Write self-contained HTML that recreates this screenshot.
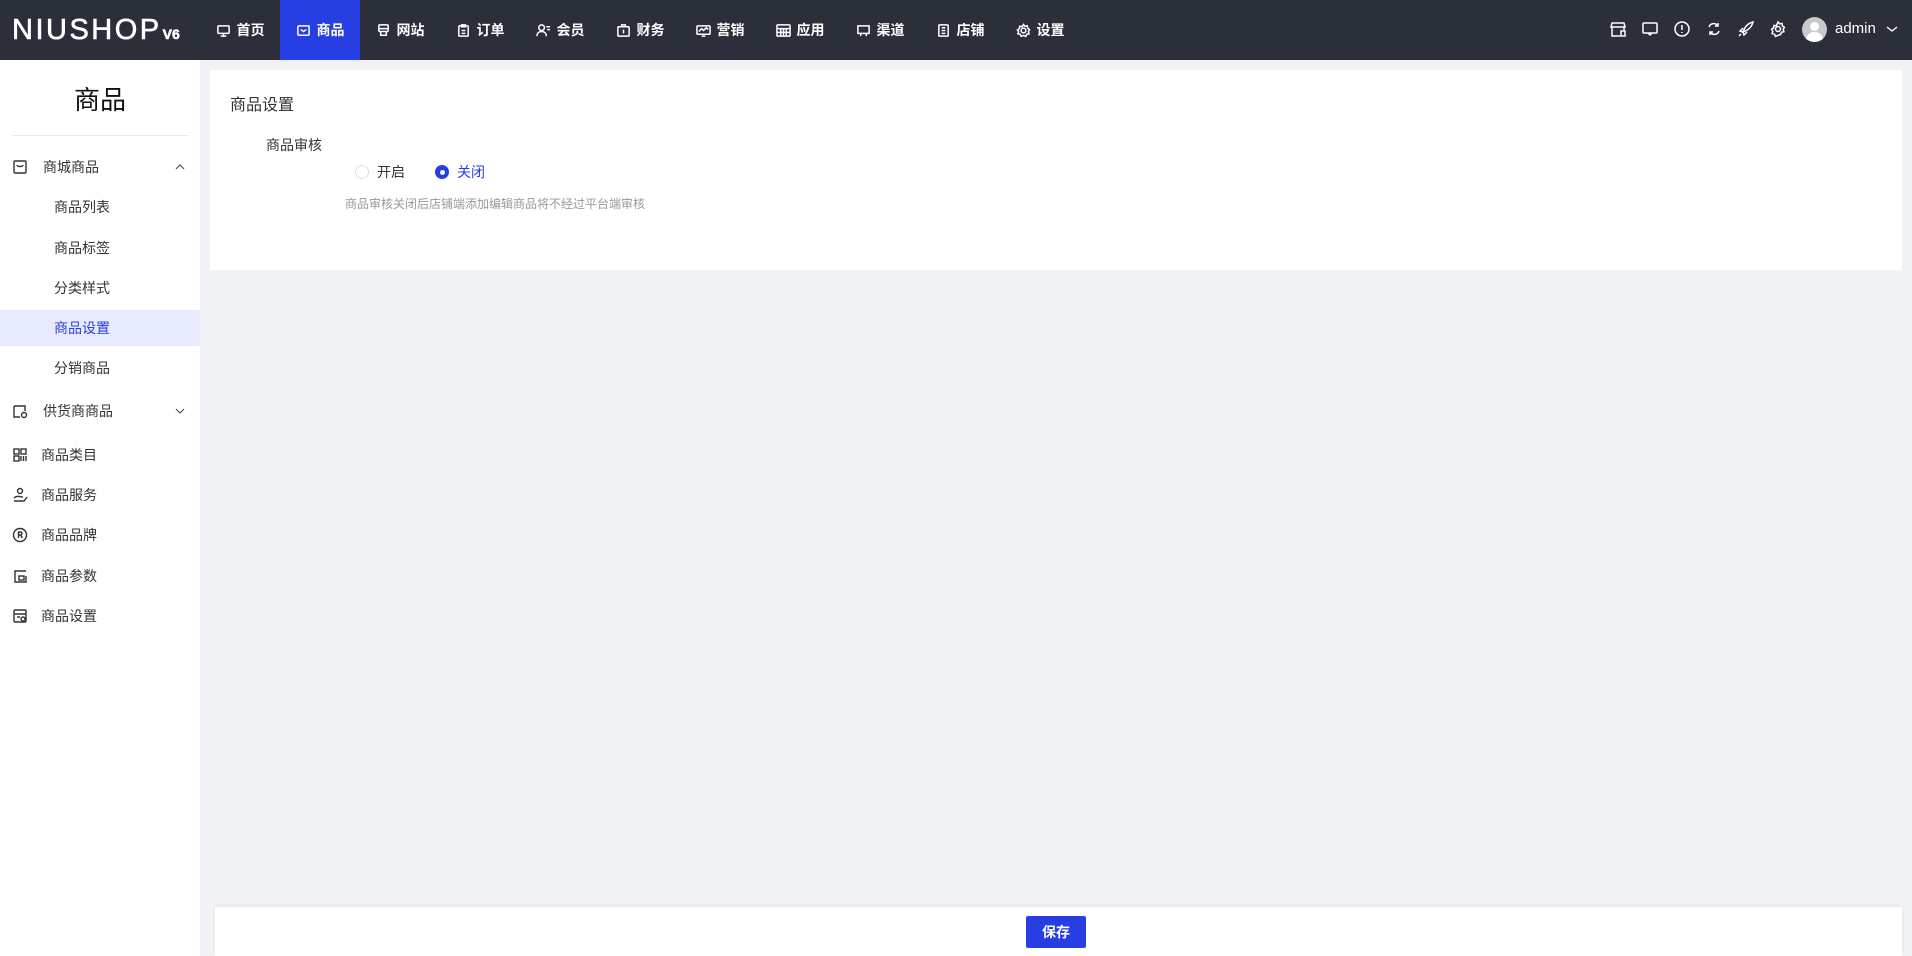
<!DOCTYPE html>
<html><head><meta charset="utf-8"><style>
*{margin:0;padding:0;box-sizing:border-box}
body{width:1912px;height:956px;background:#f0f2f5;font-family:"Liberation Sans","Noto Sans CJK SC",sans-serif;position:relative;overflow:hidden;color:#333}
.hd{position:absolute;left:0;top:0;width:1912px;height:60px;background:#2b2f3a;color:#fff}
.logo{position:absolute;left:12px;top:14px;font-size:29px;font-weight:normal;letter-spacing:2.5px;color:#fff;font-family:"Liberation Sans",sans-serif;-webkit-text-stroke:0.6px #fff}
.logo small{font-size:14px;margin-left:1px;letter-spacing:0;font-weight:bold}
.nav{position:absolute;left:200px;top:0;height:60px;display:flex}
.nav div{width:80px;height:60px;display:flex;align-items:center;justify-content:center;font-size:14px;font-weight:bold;gap:6px}
.nav div.on{background:#273ee3}
.nav svg{width:15px;height:15px;stroke:#fff;fill:none;stroke-width:1.6}
.ri{position:absolute;top:20px;width:18px;height:18px;stroke:#fff;fill:none;stroke-width:1.5}
.side{position:absolute;left:0;top:60px;width:200px;height:896px;background:#fff}
.side .t{position:absolute;top:20px;width:200px;text-align:center;font-size:26px;color:#111}
.side .dv{position:absolute;left:12px;top:75px;width:177px;height:1px;background:#e8e8e8}
.it{position:absolute;left:0;width:200px;height:36px;line-height:36px;font-size:14px;color:#333}
.it svg{position:absolute;left:12px;top:10px;width:16px;height:16px;stroke:#333;fill:none;stroke-width:1.4}
.it svg.ch{left:175px;top:15px;width:10px;height:6px;stroke:#555;stroke-width:1.2}
.card{position:absolute;left:210px;top:70px;width:1692px;height:200px;background:#fff}
.foot{position:absolute;left:215px;top:907px;width:1687px;height:49px;background:#fff;box-shadow:0 -1px 4px rgba(0,0,0,.06)}
.btn{position:absolute;left:811px;top:9px;width:60px;height:32px;background:#273ee3;color:#fff;font-size:14px;font-weight:bold;text-align:center;line-height:32px;border-radius:2px}
</style></head><body>
<div class="hd">
<div class="logo">NIUSHOP<small>V6</small></div>
<div class="nav">
<div><svg viewBox="0 0 16 16"><rect x="2" y="3" width="12" height="8" rx="1"/><path d="M8 11v3M5 14h6"/></svg>首页</div>
<div class="on"><svg viewBox="0 0 16 16"><rect x="2" y="3" width="12" height="10" rx="1"/><path d="M5 7l3 2 3-2"/></svg>商品</div>
<div><svg viewBox="0 0 16 16"><rect x="3" y="2" width="10" height="7" rx="1"/><path d="M5 9v4h6V9M3 6h10"/></svg>网站</div>
<div><svg viewBox="0 0 16 16"><rect x="3" y="3" width="10" height="11" rx="1"/><path d="M6 2h4v2H6zM6 8h4M6 11h4"/></svg>订单</div>
<div><svg viewBox="0 0 16 16"><circle cx="6" cy="5" r="3"/><path d="M1 14c0-3 2-5 5-5s5 2 5 5M11 4h4M12 7h3"/></svg>会员</div>
<div><svg viewBox="0 0 16 16"><rect x="2" y="4" width="12" height="10" rx="1"/><path d="M6 4V2h4v2M8 7v4"/></svg>财务</div>
<div><svg viewBox="0 0 16 16"><rect x="1" y="3" width="14" height="9" rx="1"/><path d="M3 9l3-3 2 2 3-3 2 2M6 14h4"/></svg>营销</div>
<div><svg viewBox="0 0 16 16"><rect x="1" y="2" width="14" height="12" rx="1"/><path d="M1 6h14M1 10h14M5 6v8M8 6v8M11 6v8"/></svg>应用</div>
<div><svg viewBox="0 0 16 16"><path d="M2 3h12v8H2zM5 11v3M11 11v3"/></svg>渠道</div>
<div><svg viewBox="0 0 16 16"><rect x="3" y="2" width="10" height="12" rx="1"/><path d="M6 5h4M6 8h4M6 11h4"/></svg>店铺</div>
<div><svg viewBox="0 0 16 16"><circle cx="8" cy="8" r="2.5"/><path d="M8 1.5l1.5 2 2.5-.5.5 2.5 2 1.5-1.3 2.2.8 2.3-2.5.5-1 2.3-2.5-1-2.5 1-1-2.3-2.5-.5.8-2.3L1.5 7.5l2-1.5.5-2.5 2.5.5z"/></svg>设置</div>
</div>
<svg class="ri" style="left:1609px" viewBox="0 0 18 18"><path d="M2 7l1-4h12l1 4zM3 7v9h8M15 7v3"/><rect x="12" y="11" width="4" height="5"/></svg>
<svg class="ri" style="left:1641px" viewBox="0 0 18 18"><rect x="2" y="3" width="14" height="10" rx="1"/><path d="M7 13l2 2 2-2M6 8h.1M9 8h.1M12 8h.1"/></svg>
<svg class="ri" style="left:1673px" viewBox="0 0 18 18"><circle cx="9" cy="9" r="7"/><path d="M9 5v5M9 12v1"/></svg>
<svg class="ri" style="left:1705px" viewBox="0 0 18 18"><path d="M4 7a5 5 0 0 1 9-1M14 11a5 5 0 0 1-9 1M13 3v3h-3M5 15v-3h3"/></svg>
<svg class="ri" style="left:1737px" viewBox="0 0 18 18"><path d="M6 12c2-6 6-9 10-10-1 4-4 8-10 10zM6 12l-3-1 3-3M6 12l1 3 3-3M4 14l-2 2"/></svg>
<svg class="ri" style="left:1769px" viewBox="0 0 18 18"><circle cx="9" cy="9" r="2.5"/><path d="M9 2l1.6 1.8 2.4-.3.4 2.4 2 1.4-1.2 2.1.7 2.3-2.4.6-1 2.2L9 15.4l-2.5 1-1-2.2-2.4-.6.7-2.3L2.6 9.2l2-1.4.4-2.4 2.4.3z"/></svg>
<div style="position:absolute;left:1802px;top:17px;width:25px;height:25px;border-radius:50%;background:#c8c9cc;overflow:hidden"><div style="position:absolute;left:8px;top:5px;width:9px;height:9px;border-radius:50%;background:#fff"></div><div style="position:absolute;left:4px;top:15px;width:17px;height:12px;border-radius:8px 8px 0 0;background:#fff"></div></div>
<div style="position:absolute;left:1835px;top:20px;font-size:15px;color:#fff">admin</div>
<svg style="position:absolute;left:1886px;top:24px;width:12px;height:10px;stroke:#fff;fill:none;stroke-width:1.3" viewBox="0 0 12 10"><path d="M1 3l5 4 5-4"/></svg>
</div>
<div class="side">
<div class="t">商品</div><div class="dv"></div>
<div class="it" style="top:89px"><svg viewBox="0 0 16 16"><rect x="2" y="2" width="12" height="12" rx="1"/><path d="M5 6c0 2 6 2 6 0"/></svg><span style="position:absolute;left:43px">商城商品</span><svg class="ch" viewBox="0 0 10 6"><path d="M1 5l4-4 4 4"/></svg></div>
<div class="it" style="top:129px"><span style="position:absolute;left:54px">商品列表</span></div>
<div class="it" style="top:170px"><span style="position:absolute;left:54px">商品标签</span></div>
<div class="it" style="top:210px"><span style="position:absolute;left:54px">分类样式</span></div>
<div class="it" style="top:250px;background:#e8ebfd;color:#273ee3"><span style="position:absolute;left:54px">商品设置</span></div>
<div class="it" style="top:290px"><span style="position:absolute;left:54px">分销商品</span></div>
<div class="it" style="top:333px"><svg viewBox="0 0 16 16"><path d="M2 3h11v5M2 3v11h6"/><circle cx="12" cy="12" r="2.5"/></svg><span style="position:absolute;left:43px">供货商商品</span><svg class="ch" viewBox="0 0 10 6"><path d="M1 1l4 4 4-4"/></svg></div>
<div class="it" style="top:377px"><svg viewBox="0 0 16 16"><rect x="2" y="2" width="5" height="5"/><rect x="9" y="2" width="5" height="5"/><rect x="2" y="9" width="5" height="5"/><path d="M9 9v5M11.5 9v5M14 9v5"/></svg><span style="position:absolute;left:41px">商品类目</span></div>
<div class="it" style="top:417px"><svg viewBox="0 0 16 16"><circle cx="8" cy="4" r="2.5"/><path d="M2 11c3-3 6-1 9-1M2 14h10l3-4"/></svg><span style="position:absolute;left:41px">商品服务</span></div>
<div class="it" style="top:457px"><svg viewBox="0 0 16 16"><circle cx="8" cy="8" r="6.5"/><path d="M6.5 11V5h2a1.5 1.5 0 0 1 0 3h-2M8.5 8l2 3"/></svg><span style="position:absolute;left:41px">商品品牌</span></div>
<div class="it" style="top:498px"><svg viewBox="0 0 16 16"><path d="M14 3H3v11h11V8"/><rect x="7" y="8" width="5" height="4"/></svg><span style="position:absolute;left:41px">商品参数</span></div>
<div class="it" style="top:538px"><svg viewBox="0 0 16 16"><rect x="2" y="2" width="12" height="12" rx="1"/><path d="M2 6h12M5 9h3"/><circle cx="11" cy="11" r="2"/></svg><span style="position:absolute;left:41px">商品设置</span></div>
</div>
<div class="card">
<div style="position:absolute;left:20px;top:21px;font-size:16px;color:#333">商品设置</div>
<div style="position:absolute;left:56px;top:65px;font-size:14px;color:#333">商品审核</div>
<div style="position:absolute;left:145px;top:95px;width:14px;height:14px;border:1px solid #dcdfe6;border-radius:50%"></div>
<div style="position:absolute;left:167px;top:92px;font-size:14px;color:#333">开启</div>
<div style="position:absolute;left:225px;top:95px;width:14px;height:14px;background:#273ee3;border-radius:50%"><div style="position:absolute;left:4.5px;top:4.5px;width:5px;height:5px;background:#fff;border-radius:50%"></div></div>
<div style="position:absolute;left:247px;top:92px;font-size:14px;color:#273ee3">关闭</div>
<div style="position:absolute;left:135px;top:125px;font-size:12px;color:#999">商品审核关闭后店铺端添加编辑商品将不经过平台端审核</div>
</div>
<div class="foot"><div class="btn">保存</div></div>
</body></html>
